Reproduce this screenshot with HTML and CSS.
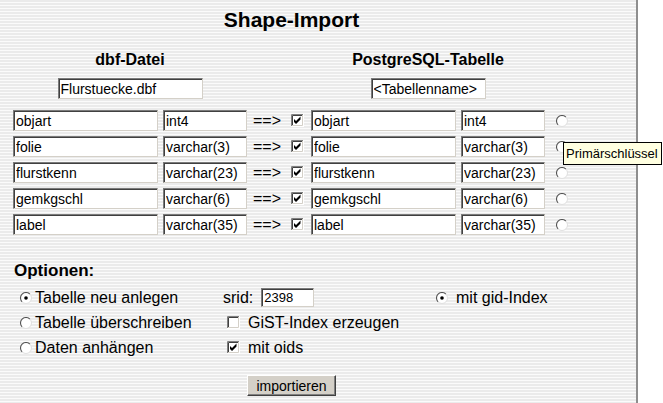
FILE: index.html
```html
<!DOCTYPE html>
<html lang="de">
<head>
<meta charset="utf-8">
<title>Shape-Import</title>
<link rel="stylesheet" href="styles.css">
</head>
<body>
<div class="page">
  <div class="content">
    <h1 class="title">Shape-Import</h1>

    <div class="cols heads">
      <div class="head head-left">dbf-Datei</div>
      <div class="head head-right">PostgreSQL-Tabelle</div>
    </div>

    <div class="cols names">
      <div class="name-left"><input class="field w145" type="text" value="Flurstuecke.dbf"></div>
      <div class="name-right"><input class="field w115" type="text" value="&lt;Tabellenname&gt;"></div>
    </div>

    <div class="cols rows">
      <input class="field w145" type="text" value="objart">
      <input class="field w84" type="text" value="int4">
      <span class="arrow">==&gt;</span>
      <span class="cb"><svg width="13" height="13" viewBox="0 0 13 13"><rect x="0" y="0" width="13" height="13" fill="#fff"/><path d="M0.5 12V0.5H12" fill="none" stroke="#808080"/><path d="M1.5 11V1.5H11" fill="none" stroke="#404040"/><path d="M0 12.5H12.5V0" fill="none" stroke="#ffffff"/><path d="M1 11.5H11.5V1" fill="none" stroke="#d4d0c8"/><path d="M3 5L5 7L9.5 2.5V5.5L5 10L3 8Z" fill="#000"/></svg></span>
      <input class="field w145" type="text" value="objart">
      <input class="field w84" type="text" value="int4">
      <span class="rb"><svg width="12" height="12" viewBox="0 0 12 12"><circle cx="6" cy="6" r="5.2" fill="#fff"/><path d="M2.11 9.89A5.5 5.5 0 0 1 9.89 2.11" fill="none" stroke="#555" stroke-width="1.1"/><path d="M9.89 2.11A5.5 5.5 0 0 1 2.11 9.89" fill="none" stroke="#e0e0e0"/></svg></span>

      <input class="field w145" type="text" value="folie">
      <input class="field w84" type="text" value="varchar(3)">
      <span class="arrow">==&gt;</span>
      <span class="cb"><svg width="13" height="13" viewBox="0 0 13 13"><rect x="0" y="0" width="13" height="13" fill="#fff"/><path d="M0.5 12V0.5H12" fill="none" stroke="#808080"/><path d="M1.5 11V1.5H11" fill="none" stroke="#404040"/><path d="M0 12.5H12.5V0" fill="none" stroke="#ffffff"/><path d="M1 11.5H11.5V1" fill="none" stroke="#d4d0c8"/><path d="M3 5L5 7L9.5 2.5V5.5L5 10L3 8Z" fill="#000"/></svg></span>
      <input class="field w145" type="text" value="folie">
      <input class="field w84" type="text" value="varchar(3)">
      <span class="rb"><svg width="12" height="12" viewBox="0 0 12 12"><circle cx="6" cy="6" r="5.2" fill="#fff"/><path d="M2.11 9.89A5.5 5.5 0 0 1 9.89 2.11" fill="none" stroke="#555" stroke-width="1.1"/><path d="M9.89 2.11A5.5 5.5 0 0 1 2.11 9.89" fill="none" stroke="#e0e0e0"/></svg></span>

      <input class="field w145" type="text" value="flurstkenn">
      <input class="field w84" type="text" value="varchar(23)">
      <span class="arrow">==&gt;</span>
      <span class="cb"><svg width="13" height="13" viewBox="0 0 13 13"><rect x="0" y="0" width="13" height="13" fill="#fff"/><path d="M0.5 12V0.5H12" fill="none" stroke="#808080"/><path d="M1.5 11V1.5H11" fill="none" stroke="#404040"/><path d="M0 12.5H12.5V0" fill="none" stroke="#ffffff"/><path d="M1 11.5H11.5V1" fill="none" stroke="#d4d0c8"/><path d="M3 5L5 7L9.5 2.5V5.5L5 10L3 8Z" fill="#000"/></svg></span>
      <input class="field w145" type="text" value="flurstkenn">
      <input class="field w84" type="text" value="varchar(23)">
      <span class="rb"><svg width="12" height="12" viewBox="0 0 12 12"><circle cx="6" cy="6" r="5.2" fill="#fff"/><path d="M2.11 9.89A5.5 5.5 0 0 1 9.89 2.11" fill="none" stroke="#555" stroke-width="1.1"/><path d="M9.89 2.11A5.5 5.5 0 0 1 2.11 9.89" fill="none" stroke="#e0e0e0"/></svg></span>

      <input class="field w145" type="text" value="gemkgschl">
      <input class="field w84" type="text" value="varchar(6)">
      <span class="arrow">==&gt;</span>
      <span class="cb"><svg width="13" height="13" viewBox="0 0 13 13"><rect x="0" y="0" width="13" height="13" fill="#fff"/><path d="M0.5 12V0.5H12" fill="none" stroke="#808080"/><path d="M1.5 11V1.5H11" fill="none" stroke="#404040"/><path d="M0 12.5H12.5V0" fill="none" stroke="#ffffff"/><path d="M1 11.5H11.5V1" fill="none" stroke="#d4d0c8"/><path d="M3 5L5 7L9.5 2.5V5.5L5 10L3 8Z" fill="#000"/></svg></span>
      <input class="field w145" type="text" value="gemkgschl">
      <input class="field w84" type="text" value="varchar(6)">
      <span class="rb"><svg width="12" height="12" viewBox="0 0 12 12"><circle cx="6" cy="6" r="5.2" fill="#fff"/><path d="M2.11 9.89A5.5 5.5 0 0 1 9.89 2.11" fill="none" stroke="#555" stroke-width="1.1"/><path d="M9.89 2.11A5.5 5.5 0 0 1 2.11 9.89" fill="none" stroke="#e0e0e0"/></svg></span>

      <input class="field w145" type="text" value="label">
      <input class="field w84" type="text" value="varchar(35)">
      <span class="arrow">==&gt;</span>
      <span class="cb"><svg width="13" height="13" viewBox="0 0 13 13"><rect x="0" y="0" width="13" height="13" fill="#fff"/><path d="M0.5 12V0.5H12" fill="none" stroke="#808080"/><path d="M1.5 11V1.5H11" fill="none" stroke="#404040"/><path d="M0 12.5H12.5V0" fill="none" stroke="#ffffff"/><path d="M1 11.5H11.5V1" fill="none" stroke="#d4d0c8"/><path d="M3 5L5 7L9.5 2.5V5.5L5 10L3 8Z" fill="#000"/></svg></span>
      <input class="field w145" type="text" value="label">
      <input class="field w84" type="text" value="varchar(35)">
      <span class="rb"><svg width="12" height="12" viewBox="0 0 12 12"><circle cx="6" cy="6" r="5.2" fill="#fff"/><path d="M2.11 9.89A5.5 5.5 0 0 1 9.89 2.11" fill="none" stroke="#555" stroke-width="1.1"/><path d="M9.89 2.11A5.5 5.5 0 0 1 2.11 9.89" fill="none" stroke="#e0e0e0"/></svg></span>
    </div>

    <div class="opt-title">Optionen:</div>
    <div class="options">
      <label class="opt"><span class="rb"><svg width="12" height="12" viewBox="0 0 12 12"><circle cx="6" cy="6" r="5.2" fill="#fff"/><path d="M2.11 9.89A5.5 5.5 0 0 1 9.89 2.11" fill="none" stroke="#555" stroke-width="1.1"/><path d="M9.89 2.11A5.5 5.5 0 0 1 2.11 9.89" fill="none" stroke="#e0e0e0"/><circle cx="6" cy="6" r="1.8" fill="#000"/></svg></span>Tabelle neu anlegen</label>
      <div class="opt opt-srid">srid: <input class="field srid" type="text" value="2398"></div>
      <label class="opt opt-gid"><span class="rb"><svg width="12" height="12" viewBox="0 0 12 12"><circle cx="6" cy="6" r="5.2" fill="#fff"/><path d="M2.11 9.89A5.5 5.5 0 0 1 9.89 2.11" fill="none" stroke="#555" stroke-width="1.1"/><path d="M9.89 2.11A5.5 5.5 0 0 1 2.11 9.89" fill="none" stroke="#e0e0e0"/><circle cx="6" cy="6" r="1.8" fill="#000"/></svg></span>mit gid-Index</label>

      <label class="opt"><span class="rb"><svg width="12" height="12" viewBox="0 0 12 12"><circle cx="6" cy="6" r="5.2" fill="#fff"/><path d="M2.11 9.89A5.5 5.5 0 0 1 9.89 2.11" fill="none" stroke="#555" stroke-width="1.1"/><path d="M9.89 2.11A5.5 5.5 0 0 1 2.11 9.89" fill="none" stroke="#e0e0e0"/></svg></span>Tabelle überschreiben</label>
      <label class="opt opt-cb"><span class="cb"><svg width="13" height="13" viewBox="0 0 13 13"><rect x="0" y="0" width="13" height="13" fill="#fff"/><path d="M0.5 12V0.5H12" fill="none" stroke="#808080"/><path d="M1.5 11V1.5H11" fill="none" stroke="#404040"/><path d="M0 12.5H12.5V0" fill="none" stroke="#ffffff"/><path d="M1 11.5H11.5V1" fill="none" stroke="#d4d0c8"/></svg></span>GiST-Index erzeugen</label>
      <div></div>

      <label class="opt"><span class="rb"><svg width="12" height="12" viewBox="0 0 12 12"><circle cx="6" cy="6" r="5.2" fill="#fff"/><path d="M2.11 9.89A5.5 5.5 0 0 1 9.89 2.11" fill="none" stroke="#555" stroke-width="1.1"/><path d="M9.89 2.11A5.5 5.5 0 0 1 2.11 9.89" fill="none" stroke="#e0e0e0"/></svg></span>Daten anhängen</label>
      <label class="opt opt-cb"><span class="cb"><svg width="13" height="13" viewBox="0 0 13 13"><rect x="0" y="0" width="13" height="13" fill="#fff"/><path d="M0.5 12V0.5H12" fill="none" stroke="#808080"/><path d="M1.5 11V1.5H11" fill="none" stroke="#404040"/><path d="M0 12.5H12.5V0" fill="none" stroke="#ffffff"/><path d="M1 11.5H11.5V1" fill="none" stroke="#d4d0c8"/><path d="M3 5L5 7L9.5 2.5V5.5L5 10L3 8Z" fill="#000"/></svg></span>mit oids</label>
      <div></div>
    </div>

    <div class="actions"><button class="btn" type="button">importieren</button></div>
  </div>
</div>
<div class="tooltip">Primärschlüssel</div>
</body>
</html>
```

FILE: styles.css
```css
html, body {
  margin: 0;
  padding: 0;
  background: #ffffff;
}
body {
  font-family: "Liberation Sans", Arial, sans-serif;
  color: #000;
  position: relative;
  width: 663px;
  height: 403px;
  overflow: hidden;
}
.page {
  width: 623px;
  height: 403px;
  padding-left: 13px;
  border-right: 2px solid #8e8e8e;
  background: repeating-linear-gradient(to bottom, #ebebeb 0, #ebebeb 2px, #fbfbfb 2px, #fbfbfb 3px);
}
.content {
  width: 557px;
  padding-top: 8px;
}
.title {
  margin: 0;
  font-size: 21px;
  line-height: 24px;
  font-weight: bold;
  text-align: center;
}
.cols {
  display: grid;
  grid-template-columns: 150px 90px 38px 20px 150px 95px 14px;
}
.heads {
  margin-top: 18px;
}
.head {
  font-size: 16px;
  line-height: 20px;
  font-weight: bold;
  text-align: center;
}
.head-left { grid-column: 1 / 3; padding-right: 6px; }
.head-right { grid-column: 5 / 7; padding-right: 11px; }
.names {
  margin-top: 8px;
}
.name-left { grid-column: 1 / 3; padding-right: 6px; display: flex; justify-content: center; }
.name-right { grid-column: 5 / 7; padding-right: 11px; display: flex; justify-content: center; }
.rows {
  margin-top: 11px;
  row-gap: 5px;
  align-items: center;
}
.field {
  box-sizing: border-box;
  height: 21px;
  margin: 0;
  padding: 0 2px;
  font-family: "Liberation Sans", Arial, sans-serif;
  font-size: 14px;
  color: #000;
  background: #fff;
  border: 1px solid;
  border-color: #7b7b7b #d4d0c8 #d4d0c8 #7b7b7b;
  box-shadow: inset 1px 1px 0 #404040;
  outline: none;
}
.w145 { width: 145px; }
.w115 { width: 115px; }
.w84 { width: 84px; }
.arrow {
  font-size: 16px;
  line-height: 21px;
}
.cb, .rb {
  display: inline-flex;
  align-items: center;
}
.cb svg, .rb svg { display: block; }
.opt-title {
  margin-top: 26px;
  margin-left: 1px;
  font-size: 17px;
  line-height: 20px;
  font-weight: bold;
}
.options {
  margin-top: 4px;
  padding-left: 7px;
  display: grid;
  grid-template-columns: 203px 213px auto;
  grid-auto-rows: 25px;
  font-size: 16px;
}
.opt {
  display: flex;
  align-items: center;
  line-height: 25px;
  white-space: nowrap;
}
.opt .rb { margin-left: 0; margin-right: 3px; }
.opt-srid .srid {
  width: 53px;
  height: 19px;
  margin-left: 8px;
  font-size: 13px;
  padding: 0 2px;
}
.opt-cb .cb { margin-left: 4px; margin-right: 8px; }
.opt-gid .rb { margin-left: 0; margin-right: 8px; }
.actions {
  margin-top: 15px;
  text-align: center;
}
.btn {
  box-sizing: border-box;
  width: 89px;
  height: 21px;
  margin: 0;
  padding: 0;
  font-family: "Liberation Sans", Arial, sans-serif;
  font-size: 14px;
  color: #000;
  background: #d4d0c8;
  border: 1px solid;
  border-color: #ffffff #404040 #404040 #ffffff;
  box-shadow: inset -1px -1px 0 #808080;
}
.tooltip {
  position: absolute;
  left: 563px;
  top: 142px;
  box-sizing: border-box;
  width: 99px;
  height: 23px;
  padding: 0 2px;
  font-size: 13px;
  line-height: 21px;
  background: #ffffe1;
  border: 1px solid #000;
  white-space: nowrap;
}
```
